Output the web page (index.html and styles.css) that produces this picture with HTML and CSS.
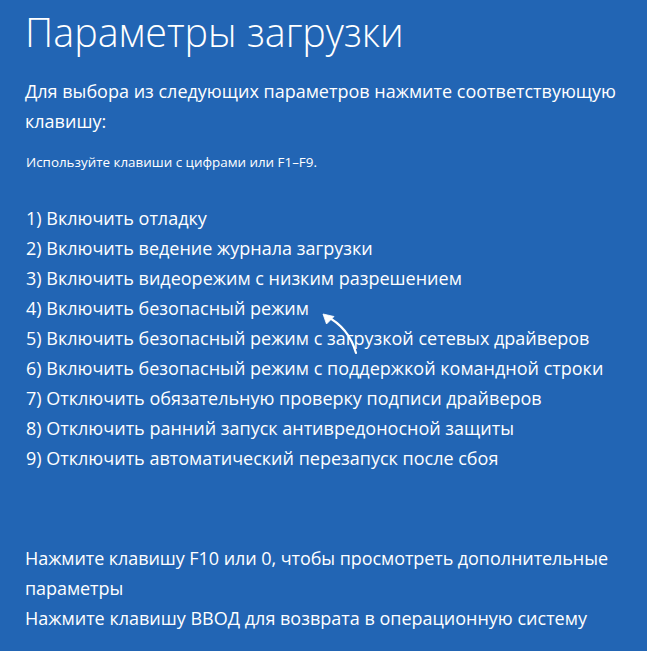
FILE: index.html
```html
<!DOCTYPE html>
<html lang="ru">
<head>
<meta charset="utf-8">
<link rel="stylesheet" href="styles.css">
</head>
<body>
<div class="screen">
  <h1 class="title">Параметры загрузки</h1>
  <p class="intro">Для выбора из следующих параметров нажмите соответствующую клавишу:</p>
  <p class="hint">Используйте клавиши с цифрами или F1–F9.</p>
  <ol class="options">
    <li class="opt">1) Включить отладку</li>
    <li class="opt">2) Включить ведение журнала загрузки</li>
    <li class="opt">3) Включить видеорежим с низким разрешением</li>
    <li class="opt opt-marked">4) Включить безопасный режим
      <svg class="arrow" width="44" height="50" viewBox="0 0 44 50">
        <path d="M4 5 C 16 11, 28 21, 34 42" fill="none" stroke="#fff" stroke-width="2.2" stroke-linecap="round"/>
        <path d="M1 3 L12 5.5 L4.5 13 Z" fill="#fff" stroke="#fff" stroke-width="0.8" stroke-linejoin="round"/>
      </svg>
    </li>
    <li class="opt">5) Включить безопасный режим с загрузкой сетевых драйверов</li>
    <li class="opt">6) Включить безопасный режим с поддержкой командной строки</li>
    <li class="opt">7) Отключить обязательную проверку подписи драйверов</li>
    <li class="opt">8) Отключить ранний запуск антивредоносной защиты</li>
    <li class="opt">9) Отключить автоматический перезапуск после сбоя</li>
  </ol>
  <div class="footer">
    <p class="foot foot-tight">Нажмите клавишу F10 или 0, чтобы просмотреть дополнительные параметры</p>
    <p class="foot">Нажмите клавишу ВВОД для возврата в операционную систему</p>
  </div>
</div>
</body>
</html>
```
FILE: styles.css
```css
html, body {
  margin: 0;
  padding: 0;
  background: #2265b4;
}
body {
  width: 647px;
  height: 651px;
  overflow: hidden;
  color: #ffffff;
  font-family: "Open Sans", "Noto Sans", sans-serif;
}
.screen {
  padding: 7px 20px 0 25px;
}
.title {
  margin: 0;
  font-size: 39.5px;
  font-weight: 300;
  line-height: 50px;
}
.intro {
  margin: 19px 0 0 0;
  font-size: 18px;
  line-height: 30px;
  max-width: 600px;
}
.hint {
  margin: 17px 0 0 1px;
  font-size: 13.4px;
  line-height: 18px;
}
.options {
  list-style: none;
  margin: 32px 0 0 1px;
  padding: 0;
}
.opt {
  font-size: 18px;
  line-height: 30px;
  position: relative;
  white-space: nowrap;
}
.arrow {
  position: absolute;
  left: 296px;
  top: 18px;
}
.footer {
  margin-top: 70px;
}
.foot {
  margin: 0;
  font-size: 18px;
  line-height: 30px;
  max-width: 600px;
}
.foot-tight {
  letter-spacing: -0.07px;
}
```
